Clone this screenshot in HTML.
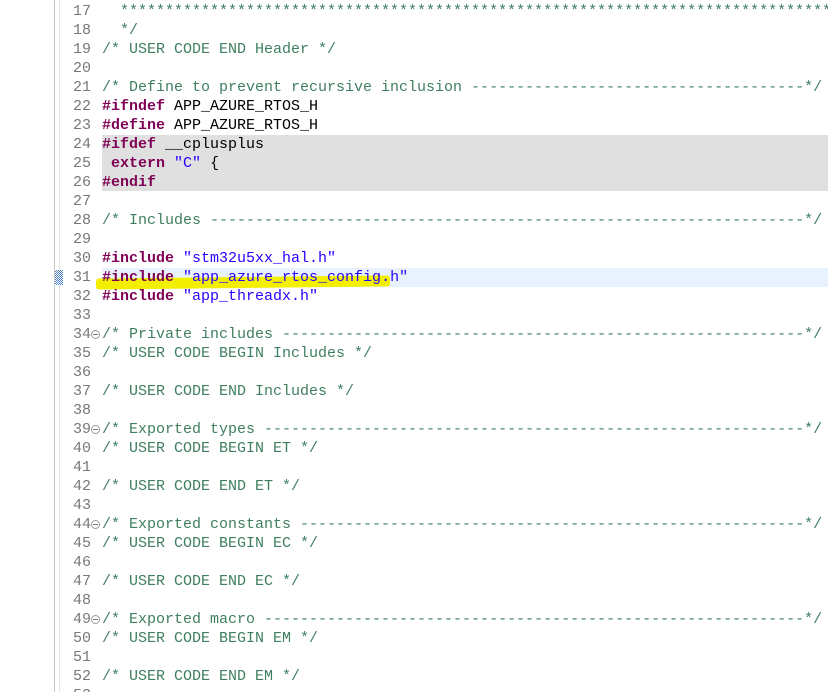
<!DOCTYPE html>
<html><head><meta charset="utf-8"><style>
html,body{margin:0;padding:0;width:828px;height:692px;overflow:hidden;background:#fff}
body{position:relative;font-family:"Liberation Mono",monospace;font-size:15px}
.g1{position:absolute;left:54px;top:0;width:1px;height:692px;background:#c8c8c8}
.g2{position:absolute;left:59px;top:0;width:1px;height:692px;background:#e4e4e4}
.ln{position:absolute;left:63px;width:28px;text-align:right;color:#787878;height:19px;line-height:19px;white-space:pre;margin-top:2px}
.cd{position:absolute;left:102px;height:19px;line-height:19px;white-space:pre;color:#000;margin-top:2px}
.c{color:#3F7F5F}.k{color:#7F0055;font-weight:bold}.s{color:#2A00FF}
.fold{position:absolute;left:91px;width:7px;height:7px;border:1px solid #9a9a9a;border-radius:50%;background:#fff;margin-top:2px}
.fold:after{content:"";position:absolute;left:1px;top:3px;width:5px;height:1px;background:#777}
</style></head><body>
<div class="g1"></div><div class="g2"></div>
<div style="position:absolute;left:102px;top:135px;width:726px;height:56px;background:#e0e0e0"></div>
<div style="position:absolute;left:102px;top:268px;width:726px;height:19px;background:#e8f2fe"></div>
<div style="position:absolute;left:96px;top:277px;width:294px;height:11px;background:#f2f000;border-radius:3px;transform:skewY(-0.6deg)"></div>
<div style="position:absolute;left:55px;top:270px;width:8px;height:15px;background:repeating-conic-gradient(#4a7fc0 0 25%,#fff 0 50%) 0 0/2px 2px"></div>

<div class="ln" style="top:0">17</div><div class="cd c" style="top:0">  ********************************************************************************</div>
<div class="ln" style="top:19px">18</div><div class="cd c" style="top:19px">  */</div>
<div class="ln" style="top:38px">19</div><div class="cd c" style="top:38px">/* USER CODE END Header */</div>
<div class="ln" style="top:57px">20</div>
<div class="ln" style="top:76px">21</div><div class="cd c" style="top:76px">/* Define to prevent recursive inclusion -------------------------------------*/</div>
<div class="ln" style="top:95px">22</div><div class="cd" style="top:95px"><span class="k">#ifndef</span> APP_AZURE_RTOS_H</div>
<div class="ln" style="top:114px">23</div><div class="cd" style="top:114px"><span class="k">#define</span> APP_AZURE_RTOS_H</div>
<div class="ln" style="top:133px">24</div><div class="cd" style="top:133px"><span class="k">#ifdef</span> __cplusplus</div>
<div class="ln" style="top:152px">25</div><div class="cd" style="top:152px"> <span class="k">extern</span> <span class="s">"C"</span> {</div>
<div class="ln" style="top:171px">26</div><div class="cd" style="top:171px"><span class="k">#endif</span></div>
<div class="ln" style="top:190px">27</div>
<div class="ln" style="top:209px">28</div><div class="cd c" style="top:209px">/* Includes ------------------------------------------------------------------*/</div>
<div class="ln" style="top:228px">29</div>
<div class="ln" style="top:247px">30</div><div class="cd" style="top:247px"><span class="k">#include</span> <span class="s">"stm32u5xx_hal.h"</span></div>
<div class="ln" style="top:266px">31</div><div class="cd" style="top:266px"><span class="k">#include</span> <span class="s">"app_azure_rtos_config.h"</span></div>
<div class="ln" style="top:285px">32</div><div class="cd" style="top:285px"><span class="k">#include</span> <span class="s">"app_threadx.h"</span></div>
<div class="ln" style="top:304px">33</div>
<div class="ln" style="top:323px">34</div><div class="fold" style="top:328px"></div><div class="cd c" style="top:323px">/* Private includes ----------------------------------------------------------*/</div>
<div class="ln" style="top:342px">35</div><div class="cd c" style="top:342px">/* USER CODE BEGIN Includes */</div>
<div class="ln" style="top:361px">36</div>
<div class="ln" style="top:380px">37</div><div class="cd c" style="top:380px">/* USER CODE END Includes */</div>
<div class="ln" style="top:399px">38</div>
<div class="ln" style="top:418px">39</div><div class="fold" style="top:423px"></div><div class="cd c" style="top:418px">/* Exported types ------------------------------------------------------------*/</div>
<div class="ln" style="top:437px">40</div><div class="cd c" style="top:437px">/* USER CODE BEGIN ET */</div>
<div class="ln" style="top:456px">41</div>
<div class="ln" style="top:475px">42</div><div class="cd c" style="top:475px">/* USER CODE END ET */</div>
<div class="ln" style="top:494px">43</div>
<div class="ln" style="top:513px">44</div><div class="fold" style="top:518px"></div><div class="cd c" style="top:513px">/* Exported constants --------------------------------------------------------*/</div>
<div class="ln" style="top:532px">45</div><div class="cd c" style="top:532px">/* USER CODE BEGIN EC */</div>
<div class="ln" style="top:551px">46</div>
<div class="ln" style="top:570px">47</div><div class="cd c" style="top:570px">/* USER CODE END EC */</div>
<div class="ln" style="top:589px">48</div>
<div class="ln" style="top:608px">49</div><div class="fold" style="top:613px"></div><div class="cd c" style="top:608px">/* Exported macro ------------------------------------------------------------*/</div>
<div class="ln" style="top:627px">50</div><div class="cd c" style="top:627px">/* USER CODE BEGIN EM */</div>
<div class="ln" style="top:646px">51</div>
<div class="ln" style="top:665px">52</div><div class="cd c" style="top:665px">/* USER CODE END EM */</div>
<div class="ln" style="top:684px">53</div>
</body></html>
